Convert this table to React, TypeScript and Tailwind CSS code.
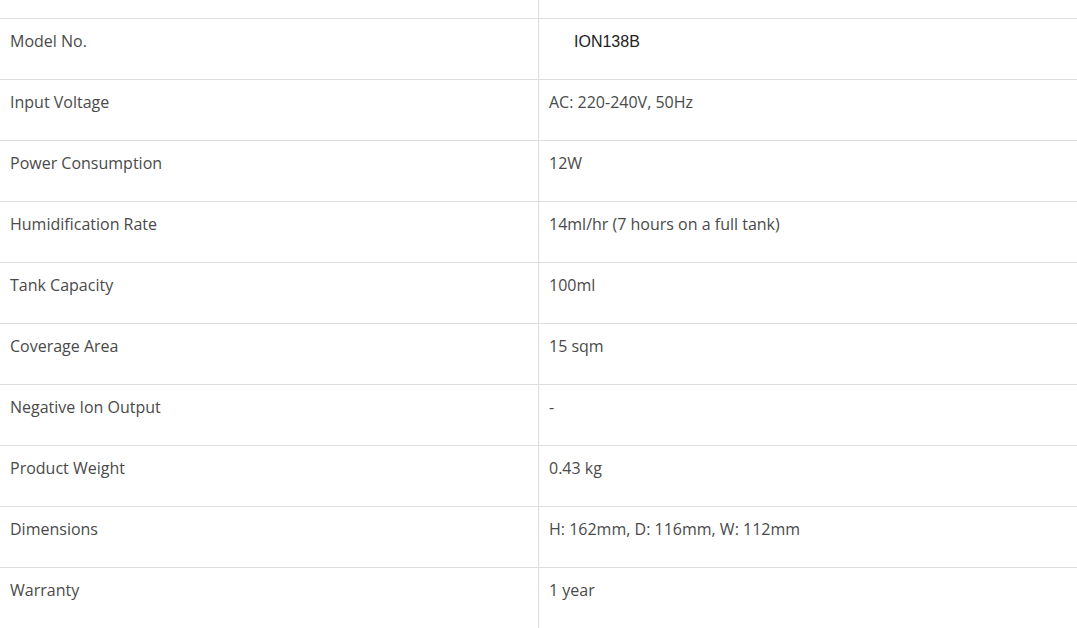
import React from "react";

const rows: [string, string][] = [
  ["Model No.", "ION138B"],
  ["Input Voltage", "AC: 220-240V, 50Hz"],
  ["Power Consumption", "12W"],
  ["Humidification Rate", "14ml/hr (7 hours on a full tank)"],
  ["Tank Capacity", "100ml"],
  ["Coverage Area", "15 sqm"],
  ["Negative Ion Output", "-"],
  ["Product Weight", "0.43 kg"],
  ["Dimensions", "H: 162mm, D: 116mm, W: 112mm"],
  ["Warranty", "1 year"],
];

export default function App() {
  return (
    <div className="w-[1077px] h-[628px] overflow-hidden bg-white text-[#4a4a4a] text-[16px] leading-[24px]" style={{ fontFamily: '"Open Sans", sans-serif' }}>
      <div className="grid grid-cols-[538px_1fr]">
        <div className="h-[19px] border-b border-[#dddddd]" />
        <div className="h-[19px] border-b border-l border-[#dddddd]" />
        {rows.map(([k, v], i) => (
          <React.Fragment key={k}>
            <div className="h-[61px] border-b border-[#dddddd] pl-[10px] pt-[10px]">{k}</div>
            <div className="h-[61px] border-b border-l border-[#dddddd] pl-[10px] pt-[10px]">
              {i === 0 ? (
                <span className="pl-[25px] text-[#222] text-[16px]" style={{ fontFamily: '"Liberation Sans", Arial, sans-serif' }}>{v}</span>
              ) : (
                v
              )}
            </div>
          </React.Fragment>
        ))}
      </div>
    </div>
  );
}
